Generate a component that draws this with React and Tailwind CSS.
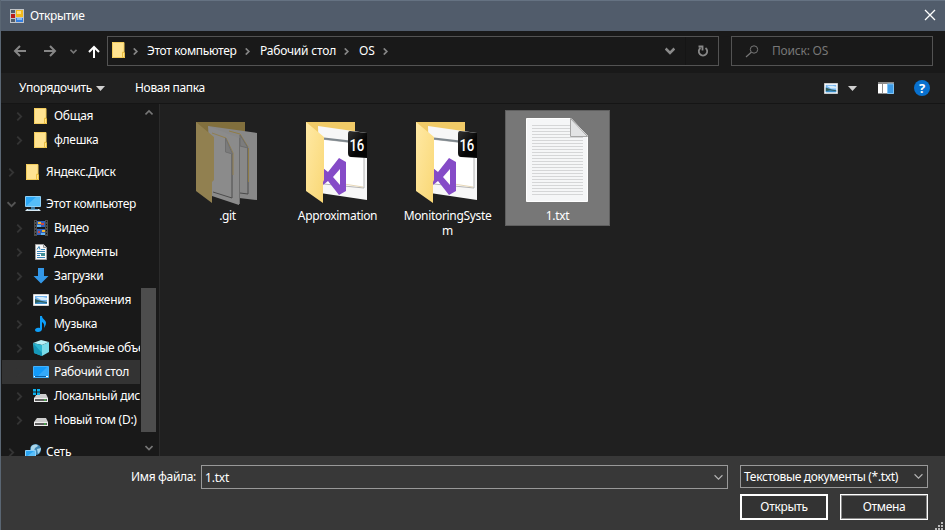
import React from "react";

function FolderSmall() {
  return (
    <svg width="14" height="17" viewBox="0 0 14 17" className="block shrink-0">
      <path d="M0 0h12v13h1v3H0z" fill="#ffe08a" />
      <path d="M0.500 0.500h11.500v9.500h-1.500v5.500h-10z" fill="#ffe391" stroke="#f3cc5c" />
      <path d="M10.500 10.500h2v5h-2z" fill="#ffe38f" stroke="#eabf42" />
    </svg>
  );
}

function Computer() {
  return (
    <svg width="17" height="16" viewBox="0 0 17 16" className="block shrink-0">
      <path d="M0.500 0.500h15v10h-15z" fill="#2ba7f7" stroke="#8fd0f7" />
      <path d="M1 10L11 1h4v9z" fill="#55bdf9" />
      <path d="M6 11h4v2H6z" fill="#3c79a3" />
      <path d="M2 13h12l2 2H0z" fill="#d7e9f4" />
      <path d="M3 13.500h10" stroke="#6ea6ca" />
    </svg>
  );
}

function Video() {
  return (
    <svg width="16" height="16" viewBox="0 0 16 16" className="block shrink-0">
      <path d="M1 0h14v16H1z" fill="#4d4d4d" />
      <path d="M4 0h8v16H4z" fill="#191919" />
      <path d="M4 1h8v6H4zM4 9h8v6H4z" fill="#3162bd" />
      <path d="M5 2h3v2H5zM9 10h3v2H9z" fill="#f2b632" />
      <path d="M8 3h3v2H8zM5 11h2v2H5z" fill="#cd473c" />
      <path d="M4 5h4v2H4zM8 13h4v2H8z" fill="#63b4ef" />
      <path d="M2.500 1v15M13.500 1v15" stroke="#161616" strokeDasharray="1 2" />
    </svg>
  );
}

function Doc() {
  return (
    <svg width="16" height="16" viewBox="0 0 16 16" className="block shrink-0">
      <path d="M2.500 0.500h8l3 3v12h-11z" fill="#fafafa" stroke="#a3a3a3" />
      <path d="M10.500 0.500v3h3" fill="#ddd" stroke="#999" />
      <path d="M4 5.500l2-3 1 3M8 5.500h4M4 7.500h8M4 9.500h4M4 11.500h3M4 13.500h8" fill="none" stroke="#3985b8" />
      <path d="M8 9h4v3H8z" fill="#418e95" />
    </svg>
  );
}

function Download() {
  return (
    <svg width="16" height="16" viewBox="0 0 16 16" className="block shrink-0">
      <path d="M5 0h6v8h4.500L8 15.500 0.500 8H5z" fill="#3397e7" />
    </svg>
  );
}

function Picture({ w = 16, h = 12 }) {
  return (
    <svg width={w} height={h} viewBox="0 0 16 12" preserveAspectRatio="none" className="block shrink-0">
      <path d="M0.500 0.500h15v11h-15z" fill="#fff" stroke="#d2d2d2" />
      <path d="M2 2h12v8H2z" fill="#75b5ef" />
      <path d="M3 3h7l4 1v2H8z" fill="#d7edfb" />
      <path d="M2 5l3 1 4 1 5 1v1H2z" fill="#315e5c" />
      <path d="M2 9l5-1 7 1v1H2z" fill="#3c8ec9" />
    </svg>
  );
}

function Music() {
  return (
    <svg width="16" height="16" viewBox="0 0 16 16" className="block shrink-0">
      <path d="M7 0h2c0 3 4 4 4 7 0 2-1 3-2 5 .5-3 0-5-2-6v7c0 2-2 3-4 3-1.700 0-3-.8-3-2 0-1.700 2.500-3 5-2z" fill="#0d9ffa" />
    </svg>
  );
}

function Cube() {
  return (
    <svg width="17" height="16" viewBox="0 0 17 16" className="block shrink-0">
      <path d="M0 3l8-3 8 2-7 3z" fill="#b9f0f6" />
      <path d="M0 3l9 2v11l-8-3z" fill="#2cb6d0" />
      <path d="M9 5l7-3v10l-7 4z" fill="#79dce9" />
      <path d="M1 4l8 9v3l-8-3z" fill="#1597b8" />
    </svg>
  );
}

function Desktop() {
  return (
    <svg width="16" height="12" viewBox="0 0 16 12" className="block shrink-0">
      <path d="M0.500 0.500h15v11h-15z" fill="#129bfa" stroke="#43b1fb" />
      <path d="M5 10L14 1h1v9z" fill="#34aafb" />
      <path d="M1 10.500h14" stroke="#075fa7" />
      <path d="M1 10.500h1M13 10.500h2" stroke="#fff" />
    </svg>
  );
}

function Drive({ win }) {
  return (
    <svg width="16" height="14" viewBox="0 0 16 14" className="block shrink-0">
      <path d="M4 5h9l2 4H1z" fill="#cdcdcd" />
      <path d="M1 9h14v4H1z" fill="#5d5d5d" />
      <path d="M1 9.500h14M1 12.500h14M1.500 9v4M14.500 9v4" stroke="#ededed" />
      <path d="M11 10.500h2v1h-2z" fill="#34e23d" />
      {win && (
        <>
          <path d="M0 0h7v6H0z" fill="#191919" />
          <path d="M0 0h3v2.500H0zM4 0h3v2.500H4zM0 3.500h3V6H0zM4 3.500h3V6H4z" fill="#0cb0ed" />
        </>
      )}
    </svg>
  );
}

function Network() {
  return (
    <svg width="17" height="16" viewBox="0 0 17 16" className="block shrink-0">
      <circle cx="10.500" cy="5.500" r="5.500" fill="#3f86b4" />
      <path d="M6 3c2-3 6-3 7-1l-3 2-1 3-3-1zM12 5l4-1c0 3-2 5-3 6z" fill="#a9d6ea" />
      <path d="M0.500 6.500h10v7h-10z" fill="#2ba5f3" stroke="#8ed1f8" />
      <path d="M1 13l8-6h1v6z" fill="#5abffa" />
      <path d="M3 15h6" stroke="#d2e7f2" />
    </svg>
  );
}

function Chevron({ dir = "right", color = "#393939", size = 8, sw = 1.6 }) {
  const d = {
    right: "M2 0.500L5.500 4 2 7.500",
    down: "M0.500 2L4 5.500 7.500 2",
    up: "M0.500 5.500L4 2 7.500 5.500",
  }[dir];
  return (
    <svg width={size} height={size} viewBox="0 0 8 8" className="block shrink-0">
      <path d={d} fill="none" stroke={color} strokeWidth={sw} />
    </svg>
  );
}

function Row({ label, icon, top, open, active }) {
  return (
    <div className={`flex h-6 shrink-0 items-center ${active ? "bg-[#333333]" : ""} ${top ? "pl-[5px]" : "pl-[13px]"}`}>
      <Chevron dir={open ? "down" : "right"} color={open ? "#555555" : "#343434"} size={9} />
      <span className="ml-[8px] flex w-[18px] shrink-0 justify-center">{icon}</span>
      <span className="ml-[4px] whitespace-nowrap tracking-[-0.28px]">{label}</span>
    </div>
  );
}

function GitFolder() {
  return (
    <svg width="64" height="84" viewBox="0 0 64 84" className="block">
      <path d="M1 1h49v70L1 69z" fill="#816f3d" />
      <path d="M13 5l49 7v67l-18-2z" fill="#888888" />
      <path d="M45 72l8 1V27" fill="none" stroke="#4a4a4a" />
      <path d="M53.500 27v34" stroke="#8d7b47" />
      <path d="M34 10l11 3 8 13" fill="none" stroke="#917d46" />
      <path d="M45 14v11l8 2z" fill="#7c7c7c" stroke="#6b6b6b" />
      <path d="M13 5l31 12v67l-27-9z" fill="#8b8b8b" />
      <path d="M18 71l19 6V33" fill="none" stroke="#4c4c4c" />
      <path d="M17 12l14 5 7 15v22" fill="none" stroke="#917f51" />
      <path d="M30.500 17v14l7 2z" fill="#7b7b7b" stroke="#6f6f6f" />
      <path d="M44.500 17v66" stroke="#6d6d6d" />
      <path d="M1 1l18 15v43l-2 2v21L1 70z" fill="#918050" />
    </svg>
  );
}

function ProjectFolder() {
  return (
    <svg width="64" height="84" viewBox="0 0 64 84" className="block">
      <defs>
        <linearGradient id="folderFront" x1="0" x2="1" y1="0" y2="1">
          <stop stopColor="#ffe9a4" />
          <stop offset="1" stopColor="#f9d775" />
        </linearGradient>
        <linearGradient id="badgeFill" x1="0" x2="1" y1="0" y2="1">
          <stop stopColor="#343434" />
          <stop offset=".6" stopColor="#050505" />
        </linearGradient>
      </defs>
      <path d="M1 1h49v70L1 69z" fill="#f0ca67" />
      <path d="M13 5l49 7v67l-47-7z" fill="#f7f7f7" />
      <path d="M16 18l43 5v44l-40-4z" fill="#fff" stroke="#b4b4b4" />
      <path d="M19 17.500l26 3" stroke="#7e878d" strokeWidth="2" />
      <path d="M39 63l19 3" stroke="#e8d9b8" />
      <path d="M34 37l7 4v29l-7 4-11-14-5 4V47l5 4zM35 48l-7 8 7 8z" fill="#854bc7" fillRule="evenodd" />
      <path d="M1 1l18 15v43l-1 2v21L1 70z" fill="url(#folderFront)" />
      <path d="M45 10l17 2v25l-16-1q-3 0-3-4V13q0-3 2-3z" fill="url(#badgeFill)" />
      <text x="44.500" y="29.500" fill="#fff" fontFamily="Roboto, sans-serif" fontSize="17" fontWeight="500" textLength="14.500" lengthAdjust="spacingAndGlyphs">16</text>
    </svg>
  );
}

const lines = Array.from({ length: 24 }, (_, i) => 7.5 + i * 3);

function TextFile() {
  return (
    <svg width="62" height="84" viewBox="0 0 62 84" className="ml-px block">
      <path d="M0.500 0.500h44.500L61.500 18v65.500H0.500z" fill="#f5f6f7" stroke="#fff" />
      {lines.map((y) => (
        <path key={y} d={`M6 ${y}h${y < 19 ? 38 : 51}`} stroke="#d5d6d7" />
      ))}
      <path d="M44.500 0.500V18.500h17z" fill="#e2e3e4" stroke="#a5a5a5" />
    </svg>
  );
}

function FileTile({ icon, lines: names, selected }) {
  return (
    <div className={`flex w-[105px] shrink-0 flex-col border text-center leading-[15px] ${selected ? "h-[116px] border-[#5f5f5f] bg-[#777777] pt-[7px]" : "h-[131px] border-transparent pt-[10px]"}`}>
      <div className={`flex shrink-0 items-start pl-[19px] ${selected ? "h-[90px]" : "h-[87px]"}`}>{icon}</div>
      {names.map((name) => (
        <div key={name} className="h-[15px]">{name}</div>
      ))}
    </div>
  );
}

const divider = "#868686";

export default function App() {
  return (
    <div className="flex h-[530px] w-[945px] flex-col overflow-hidden border-l border-[#5a6673] bg-[#202020] font-['Noto_Sans','Open_Sans',sans-serif] text-[12px] leading-4 tracking-[-0.33px] text-white">
      <header className="flex h-[31px] shrink-0 items-center border-t border-[#657282] bg-[#515c6b] pl-[9px] pr-[9px]">
        <svg width="14" height="14" viewBox="0 0 14 14" className="mb-px block">
          <path d="M0 0h14v14H0z" fill="#c2c5c9" />
          <path d="M1 1h4v3H1zM1 10h4v3H1z" fill="#515c6b" />
          <path d="M1 5h4v4H1z" fill="#ba1b1b" />
          <path d="M6 1h7v7H6z" fill="#f2b91c" />
          <path d="M7 2h4v3H7z" fill="#ffe083" />
          <path d="M6 9h7v4H6z" fill="#347ee0" />
          <path d="M7 9h5v2H7z" fill="#83b7f8" />
        </svg>
        <span className="ml-[6px]">Открытие</span>
        <svg width="12" height="12" viewBox="0 0 12 12" className="mb-[2px] ml-auto block">
          <path d="M1 1l10 10M11 1L1 11" stroke="#fff" strokeWidth="1.300" />
        </svg>
      </header>

      <nav className="flex h-[42px] shrink-0 items-start bg-[#191919] pt-[5px]">
        <div className="flex h-[30px] w-[106px] shrink-0 items-center pl-[12px]">
          <svg width="14" height="12" viewBox="0 0 14 12" className="block">
            <path d="M13 6H2M7 1L2 6l5 5" fill="none" stroke="#868686" strokeWidth="2" />
          </svg>
          <svg width="14" height="12" viewBox="0 0 14 12" className="ml-[16px] block">
            <path d="M1 6h11M7 1l5 5-5 5" fill="none" stroke="#868686" strokeWidth="2" />
          </svg>
          <span className="ml-[13px]"><Chevron dir="down" color="#777777" size={7} sw={2} /></span>
          <svg width="13" height="14" viewBox="0 0 13 14" className="ml-[11px] mt-[2px] block">
            <path d="M6 13V2M1 7l5-5 5 5" fill="none" stroke="#fff" strokeWidth="2" />
          </svg>
        </div>
        <div className="flex h-[30px] w-[612px] shrink-0 items-center border border-[#535353] pl-[4px]">
          <span className="-mt-px"><FolderSmall /></span>
          <span className="ml-[6px]"><Chevron color={divider} size={7} sw={2} /></span>
          <span className="ml-[8px] w-[91px] whitespace-nowrap">Этот компьютер</span>
          <span className="ml-[6px]"><Chevron color={divider} size={7} sw={2} /></span>
          <span className="ml-[9px] w-[77px] whitespace-nowrap tracking-[-0.2px]">Рабочий стол</span>
          <span className="ml-[6px]"><Chevron color={divider} size={7} sw={2} /></span>
          <span className="ml-[9px] w-[16px] tracking-[-0.1px]">OS</span>
          <span className="ml-[7px]"><Chevron color={divider} size={7} sw={2} /></span>
          <span className="ml-auto mr-[10px]"><Chevron dir="down" color="#8a8a8a" size={10} sw={2} /></span>
          <div className="flex h-full w-[33px] items-center justify-center border-l border-[#151515] pl-[2px]">
            <svg width="12" height="12" viewBox="0 0 12 12" className="block">
              <path d="M8.500 3a4.200 4.200 0 1 1-5 0M1.500 1.500h4V5.500" fill="none" stroke="#888888" strokeWidth="1.800" />
            </svg>
          </div>
        </div>
        <div className="ml-[12px] flex h-[30px] w-[202px] items-center border border-[#535353] pl-[13px] text-[#777777]">
          <svg width="14" height="13" viewBox="0 0 14 13" className="block">
            <circle cx="9" cy="4.500" r="3.700" fill="none" stroke="#777777" />
            <path d="M6.300 7.200L1 12" stroke="#777777" strokeWidth="1.200" />
          </svg>
          <span className="ml-[13px] tracking-[-0.2px]">Поиск: OS</span>
        </div>
      </nav>

      <div className="flex h-[30px] shrink-0 items-center bg-[#202020] pl-[18px]">
        <span className="w-[73px] whitespace-nowrap">Упорядочить</span>
        <svg width="9" height="5" viewBox="0 0 9 5" className="ml-[4px] block"><path d="M0 0h9L4.500 5z" fill="#d0d0d0" /></svg>
        <span className="ml-[30px]">Новая папка</span>
        <div className="ml-auto flex items-center pr-[15px]">
          <Picture w={14} h={11} />
          <svg width="9" height="5" viewBox="0 0 9 5" className="ml-[10px] block"><path d="M0 0h9L4.500 5z" fill="#d0d0d0" /></svg>
          <svg width="16" height="12" viewBox="0 0 16 12" className="ml-[21px] block">
            <path d="M0 0h16v12H0z" fill="#8b8b8b" />
            <path d="M0 2h4v9H0zM5 2h4v9H5z" fill="#fff" />
            <path d="M9.500 2h6v9.500h-6z" fill="#3d9ae5" stroke="#7ec3f5" />
          </svg>
          <div className="ml-[20px] flex h-[16px] w-[16px] items-center justify-center rounded-full bg-[#0871cf] text-[13px] font-bold tracking-normal">?</div>
        </div>
      </div>

      <main className="flex h-[353px] shrink-0 border-t border-[#151515]">
        <aside className="flex w-[139px] shrink-0 flex-col overflow-hidden bg-[#191919] pl-px">
          <Row icon={<FolderSmall />} label="Общая" />
          <Row icon={<FolderSmall />} label="флешка" />
          <div className="h-2 shrink-0" />
          <Row top icon={<FolderSmall />} label="Яндекс.Диск" />
          <div className="h-2 shrink-0" />
          <Row top open icon={<Computer />} label="Этот компьютер" />
          <Row icon={<Video />} label="Видео" />
          <Row icon={<Doc />} label="Документы" />
          <Row icon={<Download />} label="Загрузки" />
          <Row icon={<Picture />} label="Изображения" />
          <Row icon={<Music />} label="Музыка" />
          <Row icon={<Cube />} label="Объемные объекты" />
          <Row active icon={<Desktop />} label="Рабочий стол" />
          <Row icon={<Drive win />} label="Локальный диск (C:)" />
          <Row icon={<Drive />} label="Новый том (D:)" />
          <div className="h-2 shrink-0" />
          <Row top icon={<Network />} label="Сеть" />
        </aside>
        <div className="flex w-[17px] shrink-0 flex-col items-center bg-[#191919] pt-[5px]">
          <Chevron dir="up" color="#777777" />
          <div className="mt-[171px] h-[144px] w-[15px] bg-[#4d4d4d]" />
          <span className="mt-[12px]"><Chevron dir="down" color="#777777" /></span>
        </div>
        <div className="w-[3px] shrink-0 border-r border-[#2b2b2b] bg-[#191919]" />
        <section className="flex items-start gap-[5px] pl-[15px] pt-[6px]">
          <FileTile icon={<GitFolder />} lines={[".git"]} />
          <FileTile icon={<ProjectFolder />} lines={["Approximation"]} />
          <FileTile icon={<ProjectFolder />} lines={["MonitoringSyste", "m"]} />
          <FileTile selected icon={<TextFile />} lines={["1.txt"]} />
        </section>
      </main>

      <footer className="flex h-[74px] shrink-0 items-start bg-[#383838] pt-[9px]">
        <span className="w-[200px] shrink-0 pr-[5px] pt-[4px] text-right">Имя файла:</span>
        <div className="flex h-[24px] w-[527px] shrink-0 items-center justify-between border border-[#999999] pl-[3px] pr-[4px]">
          <span className="pt-[2px] tracking-[-0.2px]">1.txt</span>
          <Chevron dir="down" color="#b5b5b5" size={9} sw={1} />
        </div>
        <div className="ml-[12px] w-[188px]">
          <div className="flex h-[23px] items-center justify-between border border-[#999999] bg-[#333333] pl-[3px] pr-[4px]">
            <span className="whitespace-nowrap">Текстовые документы (*.txt)</span>
            <Chevron dir="down" color="#b5b5b5" size={9} sw={1} />
          </div>
          <div className="mt-[6px] flex justify-between">
            <button className="h-[26px] w-[88px] border-2 border-white bg-[#333333] leading-[22px]">Открыть</button>
            <button className="h-[26px] w-[88px] border border-white bg-[#333333] leading-[22px] ring-1 ring-inset ring-[#888888]">Отмена</button>
          </div>
        </div>
        <svg width="8" height="8" viewBox="0 0 8 8" className="ml-auto mr-[2px] block self-end">
          <path d="M6 0h2v2H6zM3 3h2v2H3zM6 3h2v2H6zM0 6h2v2H0zM3 6h2v2H3zM6 6h2v2H6z" fill="#bbbbbb" />
        </svg>
      </footer>
    </div>
  );
}
